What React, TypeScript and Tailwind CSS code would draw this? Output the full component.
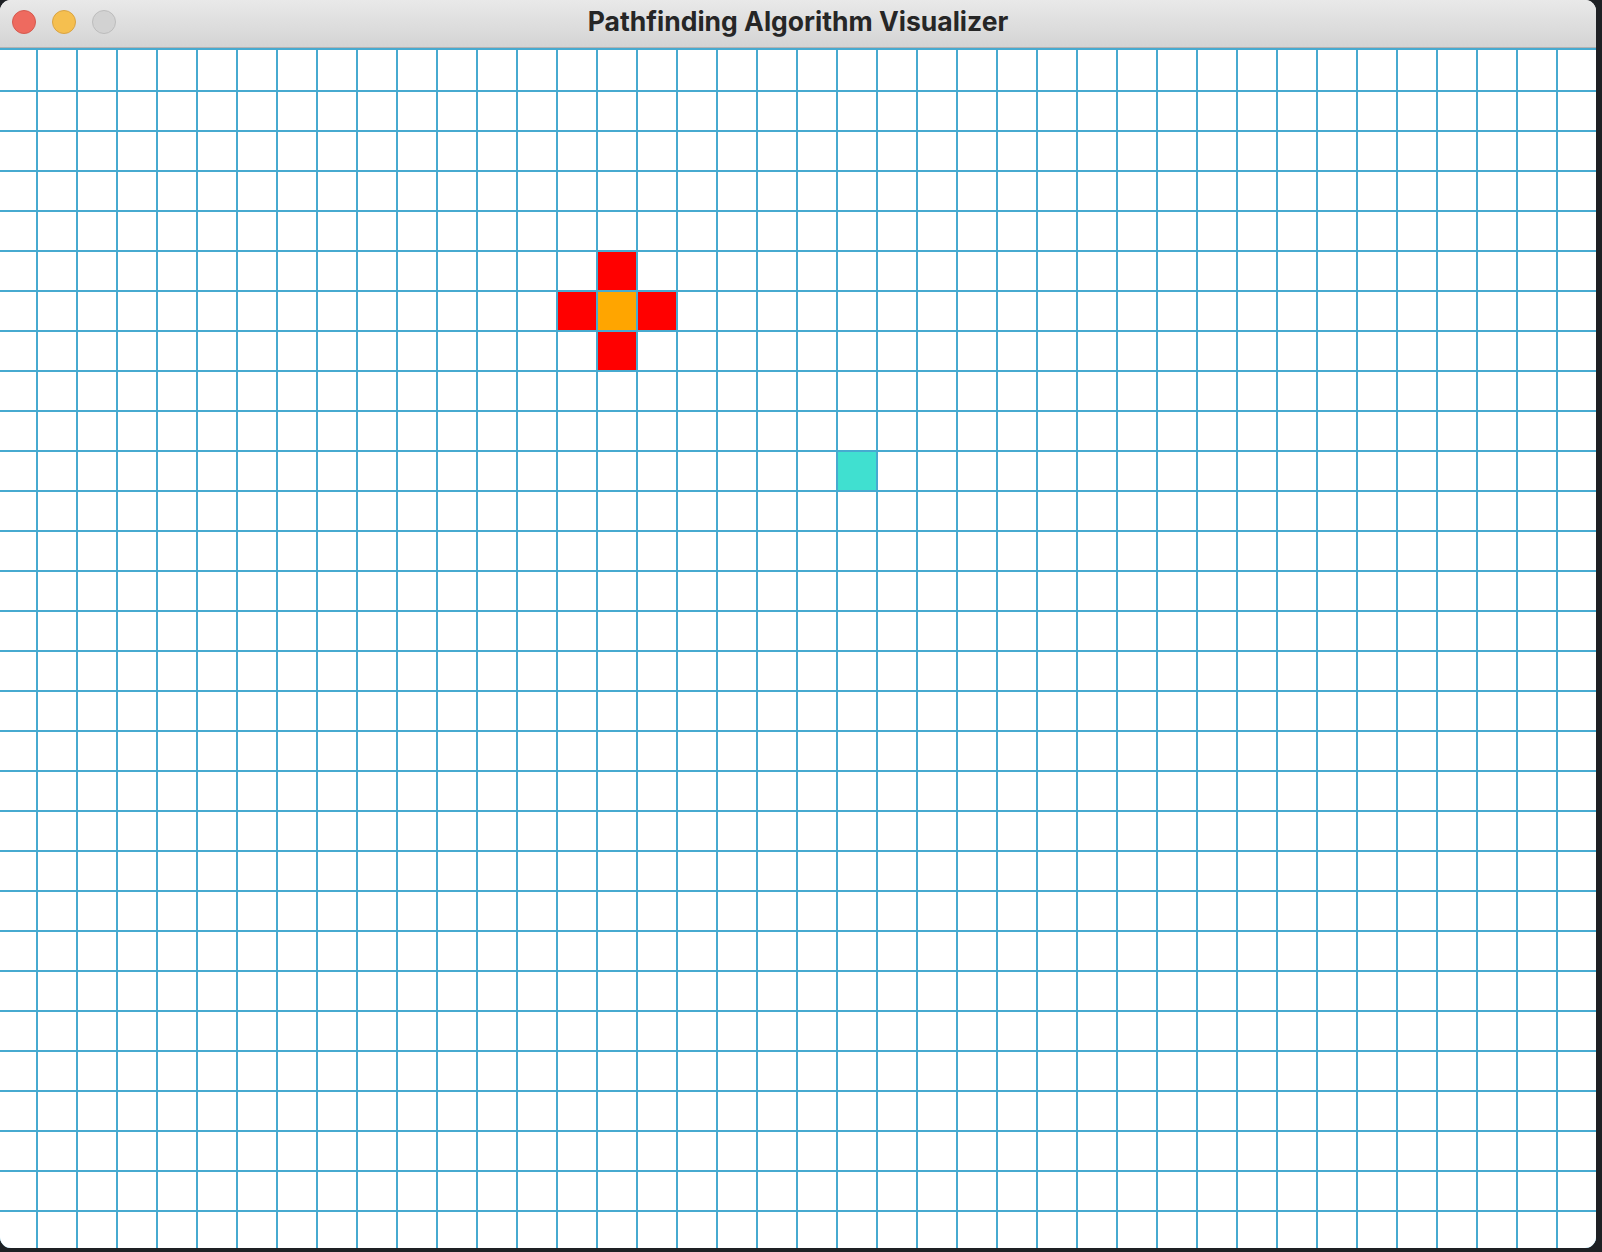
import React from "react";

const COLS = 40;
const ROWS = 30;

const special: Record<string, string> = {
  "5-15": "bg-[#ff0000]",
  "6-14": "bg-[#ff0000]",
  "6-15": "bg-[#ffa500]",
  "6-16": "bg-[#ff0000]",
  "7-15": "bg-[#ff0000]",
  "10-21": "bg-[#40e0d0]",
};

export default function App() {
  const cells: React.ReactNode[] = [];
  for (let r = 0; r < ROWS; r++) {
    for (let c = 0; c < COLS; c++) {
      const cls = special[`${r}-${c}`] ?? "bg-white";
      cells.push(<div key={`${r}-${c}`} className={cls} />);
    }
  }
  return (
    <div className="w-[1602px] h-[1252px] bg-[#1e2024] overflow-hidden">
      <div className="w-[1596px] h-[1248px] rounded-[11px] overflow-hidden bg-white flex flex-col">
        <div className="h-[48px] shrink-0 relative flex items-center justify-center bg-gradient-to-b from-[#e9e9e9] to-[#d4d4d4] border-b border-[#b2b2b2]">
          <div className="absolute left-[12px] top-[10px] flex gap-[16px]">
            <div className="w-[24px] h-[24px] rounded-full bg-[#ee6a5f] border border-[#d45a4f]" />
            <div className="w-[24px] h-[24px] rounded-full bg-[#f5bf4f] border border-[#d8a344]" />
            <div className="w-[24px] h-[24px] rounded-full bg-[#d2d2d2] border border-[#bcbcbc]" />
          </div>
          <span className="text-[26.5px] font-bold text-[#262626] leading-none pb-[4px]" style={{ fontFamily: "Inter, 'Noto Sans', sans-serif" }}>
            Pathfinding Algorithm Visualizer
          </span>
        </div>
        <div className="flex-1 overflow-hidden bg-[#47aad0] pt-[2px]">
          <div className="grid gap-[2px] grid-cols-[36px_repeat(39,38px)] grid-rows-[40px_repeat(29,38px)]">
            {cells}
          </div>
        </div>
      </div>
    </div>
  );
}
